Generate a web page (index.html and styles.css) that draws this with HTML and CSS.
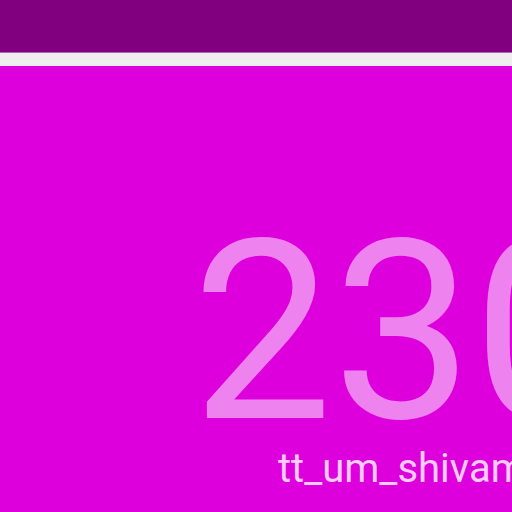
FILE: index.html
```html
<!DOCTYPE html>
<html>
<head>
<meta charset="utf-8">
<link rel="stylesheet" href="styles.css">
</head>
<body>
<header class="topbar"></header>
<div class="strip"></div>
<main class="panel">
  <div class="value">2300</div>
  <div class="label">tt_um_shivam_counter</div>
</main>
</body>
</html>
```
FILE: styles.css
```css
html, body {
  margin: 0;
  padding: 0;
  height: 100%;
  overflow: hidden;
  font-family: Roboto, "Liberation Sans", sans-serif;
}
body {
  display: flex;
  flex-direction: column;
  background: #dd00dd;
}
.topbar {
  height: 52px;
  background: #800080;
  border-bottom: 1px solid #b060b0;
  flex: none;
}
.strip {
  height: 13px;
  background: #eeeeee;
  flex: none;
}
.panel {
  flex: 1;
  background: #dd00dd;
  padding: 159px 0 0 0;
  white-space: nowrap;
  overflow: hidden;
}
.value {
  font-size: 250px;
  line-height: 215px;
  color: #ee82ee;
  padding-left: 192px;
}
.label {
  font-size: 40px;
  line-height: 42px;
  margin-top: 8px;
  color: #ffccff;
  padding-left: 278px;
}
```
